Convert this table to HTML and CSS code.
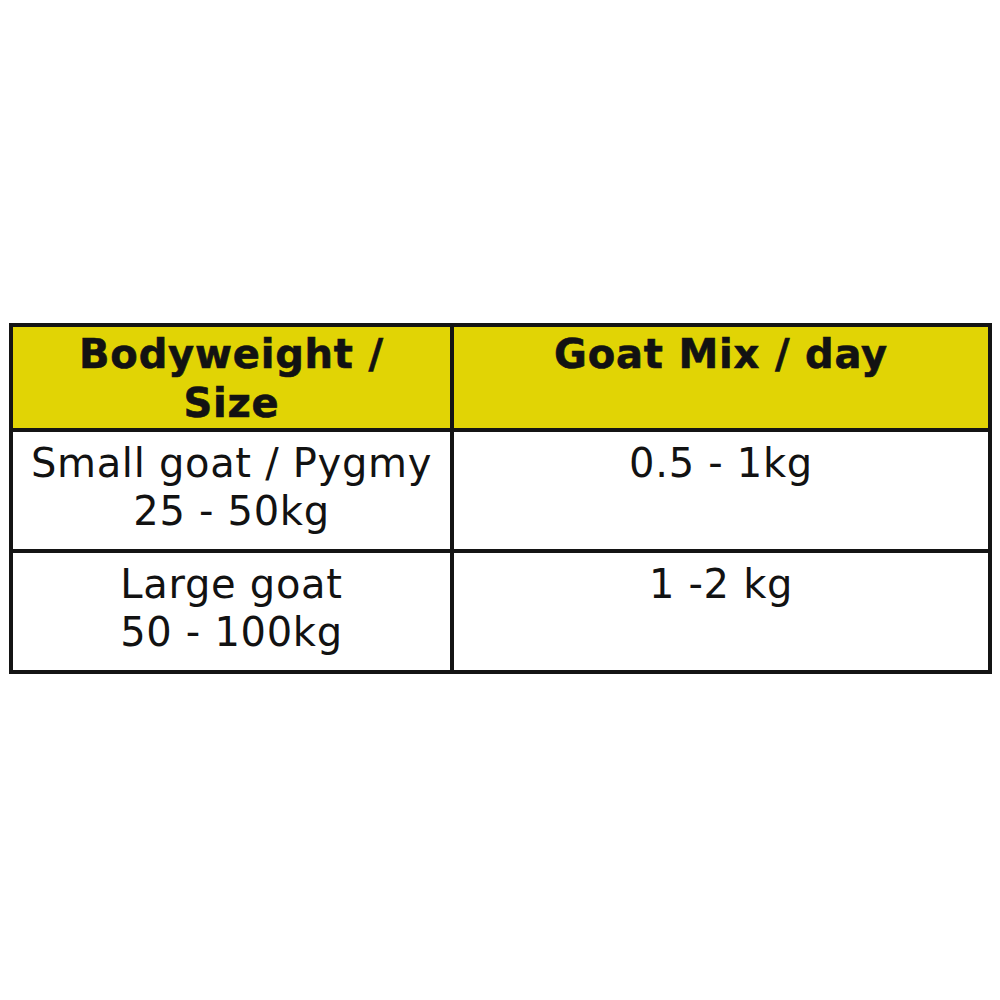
FILE: index.html
```html
<!DOCTYPE html>
<html lang="en">
<head>
<meta charset="utf-8">
<title>Goat Mix feeding guide</title>
<link rel="stylesheet" href="styles.css">
</head>
<body>
<div class="page">
  <div class="feed-table">
    <div class="cell head">Bodyweight /<br>Size</div>
    <div class="cell head">Goat Mix / day</div>
    <div class="cell body">Small goat / Pygmy<br>25 - 50kg</div>
    <div class="cell body">0.5 - 1kg</div>
    <div class="cell body">Large goat<br>50 - 100kg</div>
    <div class="cell body">1 -2 kg</div>
  </div>
</div>
</body>
</html>
```

FILE: styles.css
```css
html, body {
  margin: 0;
  padding: 0;
  background: #ffffff;
}

.page {
  padding: 323px 0 0 9px;
}

.feed-table {
  display: grid;
  grid-template-columns: 441px 538px;
  grid-template-rows: 105px 121px 121px;
  width: 983px;
  box-sizing: border-box;
  border-top: 4px solid #141414;
  border-left: 4px solid #141414;
  font-family: "DejaVu Sans", Verdana, sans-serif;
  color: #121212;
}

.cell {
  box-sizing: border-box;
  border-right: 4px solid #141414;
  border-bottom: 4px solid #141414;
  text-align: center;
}

.head {
  background: #e1d405;
  font-weight: bold;
  font-size: 40px;
  line-height: 49px;
  padding-top: 3px;
  letter-spacing: 0.8px;
  -webkit-text-stroke: 0.6px #121212;
}

.body {
  background: #ffffff;
  font-size: 40px;
  line-height: 48px;
  padding-top: 7px;
  letter-spacing: 0.7px;
}
```
